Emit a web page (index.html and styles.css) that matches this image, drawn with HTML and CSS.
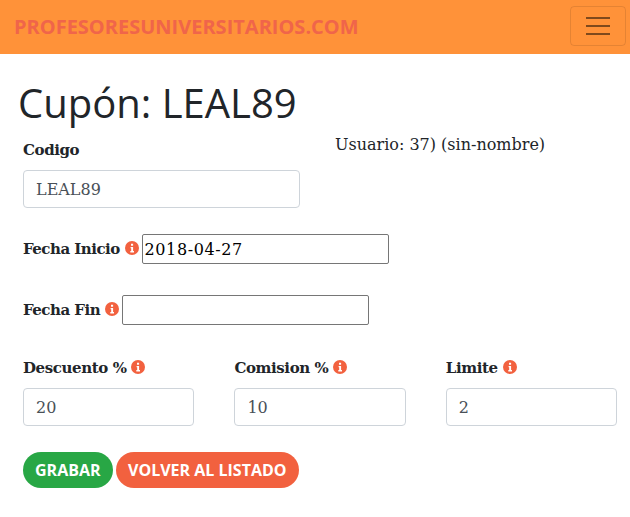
FILE: index.html
```html
<!DOCTYPE html>
<html lang="es">
<head>
    <meta charset="UTF-8">
    <meta name="viewport" content="width=device-width, initial-scale=1.0">
    <title>Cupón: LEAL89</title>
    <link rel="stylesheet" href="styles.css">
</head>
<body>

    <!-- barra superior -->
    <nav class="navbar">
        <a class="brand" href="#">PROFESORESUNIVERSITARIOS.COM</a>
        <button class="toggler" type="button" aria-label="Menu">
            <span></span><span></span><span></span>
        </button>
    </nav>

    <main class="content">
        <h1>Cupón: LEAL89</h1>

        <form class="coupon-form">
            <div class="top-row">
                <div class="field code-field">
                    <label for="codigo">Codigo</label>
                    <input class="control" type="text" id="codigo" value="LEAL89">
                </div>
                <p class="user-info">Usuario: 37) (sin-nombre)</p>
            </div>

            <div class="date-row">
                <label for="inicio">Fecha Inicio
                    <svg class="info" viewBox="0 0 14 14"><circle cx="7" cy="7" r="7"/><path d="M5.6 5.9h2.5v4.2h.9v1.3H5.3v-1.3h.9V7.2h-.6zM6 2.7h2.1v2H6z"/></svg>
                </label>
                <input class="date-input" type="text" id="inicio" value="2018-04-27">
            </div>

            <div class="date-row">
                <label for="fin">Fecha Fin
                    <svg class="info" viewBox="0 0 14 14"><circle cx="7" cy="7" r="7"/><path d="M5.6 5.9h2.5v4.2h.9v1.3H5.3v-1.3h.9V7.2h-.6zM6 2.7h2.1v2H6z"/></svg>
                </label>
                <input class="date-input" type="text" id="fin">
            </div>

            <div class="three-cols">
                <div class="field">
                    <label for="descuento">Descuento %
                        <svg class="info" viewBox="0 0 14 14"><circle cx="7" cy="7" r="7"/><path d="M5.6 5.9h2.5v4.2h.9v1.3H5.3v-1.3h.9V7.2h-.6zM6 2.7h2.1v2H6z"/></svg>
                    </label>
                    <input class="control" type="text" id="descuento" value="20">
                </div>
                <div class="field">
                    <label for="comision">Comision %
                        <svg class="info" viewBox="0 0 14 14"><circle cx="7" cy="7" r="7"/><path d="M5.6 5.9h2.5v4.2h.9v1.3H5.3v-1.3h.9V7.2h-.6zM6 2.7h2.1v2H6z"/></svg>
                    </label>
                    <input class="control" type="text" id="comision" value="10">
                </div>
                <div class="field">
                    <label for="limite">Limite
                        <svg class="info" viewBox="0 0 14 14"><circle cx="7" cy="7" r="7"/><path d="M5.6 5.9h2.5v4.2h.9v1.3H5.3v-1.3h.9V7.2h-.6zM6 2.7h2.1v2H6z"/></svg>
                    </label>
                    <input class="control" type="text" id="limite" value="2">
                </div>
            </div>

            <div class="actions">
                <button class="btn btn-green" type="button">GRABAR</button>
                <button class="btn btn-red" type="button">VOLVER AL LISTADO</button>
            </div>
        </form>
    </main>

</body>
</html>
```

FILE: styles.css
```css
/* base */
body {
    margin: 0;
    background-color: #fff;
    color: #212529;
    font-family: "DejaVu Serif", serif;
    font-size: 16px;
    overflow: hidden;
}

/* barra superior */
.navbar {
    display: flex;
    align-items: center;
    justify-content: space-between;
    height: 54px;
    padding: 0 4px 2px 14px;
    box-sizing: border-box;
    background-color: #ff9239;
}

.brand {
    color: #f0654a;
    font-family: "Open Sans", sans-serif;
    font-size: 20px;
    font-weight: 700;
    text-decoration: none;
}

.toggler {
    display: flex;
    flex-direction: column;
    justify-content: center;
    align-items: center;
    gap: 6px;
    width: 56px;
    height: 40px;
    padding: 0;
    background: transparent;
    border: 1px solid rgba(0, 0, 0, 0.1);
    border-radius: 4px;
}

.toggler span {
    display: block;
    width: 24px;
    height: 2px;
    background-color: rgba(0, 0, 0, 0.5);
}

/* contenido */
.content {
    padding: 0 13px 0 18px;
}

h1 {
    margin: 22px 0 0;
    font-family: "Open Sans", sans-serif;
    font-size: 40px;
    font-weight: 400;
    line-height: 54px;
}

.coupon-form {
    padding-left: 5px;
}

label {
    font-weight: 700;
    font-size: 15px;
    letter-spacing: -0.4px;
    color: #212529;
}

.info {
    width: 14px;
    height: 14px;
    vertical-align: -1px;
    fill: #f2613f;
}

.info path {
    fill: #fff;
}

.field {
    display: flex;
    flex-direction: column;
}

.field label {
    line-height: 24px;
    margin-bottom: 8px;
}

.control {
    box-sizing: border-box;
    width: 100%;
    height: 38px;
    padding: 6px 12px;
    border: 1px solid #ced4da;
    border-radius: 4px;
    background-color: #fff;
    color: #495057;
    font-family: inherit;
    font-size: 16px;
}

.top-row {
    display: flex;
    align-items: flex-start;
}

.code-field {
    width: 277px;
    margin-top: 8px;
}

.user-info {
    margin: 3px 0 0 35px;
    line-height: 24px;
}

.date-row {
    display: flex;
    align-items: center;
    gap: 3px;
    margin-top: 26px;
}

.date-row label {
    letter-spacing: -0.5px;
}

.date-row + .date-row {
    margin-top: 31px;
}

.date-input {
    box-sizing: border-box;
    width: 247px;
    height: 30px;
    padding: 1px 2px;
    border: 1px solid #767676;
    border-radius: 2px;
    background-color: #fff;
    color: #000;
    font-family: inherit;
    font-size: 16px;
    letter-spacing: 0.6px;
}

.three-cols {
    display: grid;
    grid-template-columns: repeat(3, 171.4px);
    column-gap: 40px;
    margin-top: 31px;
}

.actions {
    display: flex;
    gap: 3px;
    margin-top: 26px;
}

.btn {
    height: 36px;
    padding: 0 12px;
    border: none;
    border-radius: 18px;
    color: #fff;
    font-family: "Open Sans", sans-serif;
    font-size: 16px;
    font-weight: 700;
    cursor: pointer;
}

.btn-green {
    background-color: #28a745;
}

.btn-red {
    padding: 0 12.5px;
    background-color: #f2613f;
}
```
